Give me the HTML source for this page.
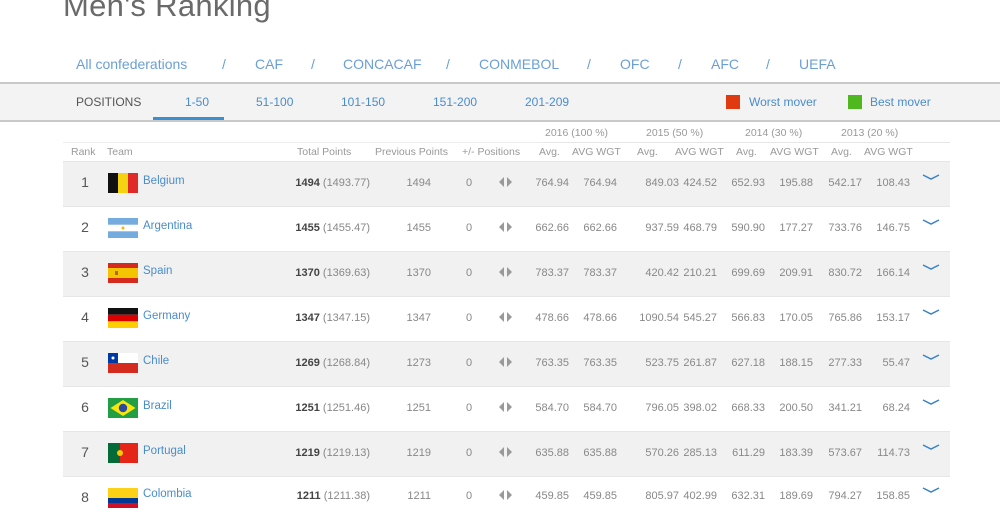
<!DOCTYPE html>
<html><head><meta charset="utf-8"><style>
*{margin:0;padding:0;box-sizing:border-box}
body{width:1000px;height:500px;overflow:hidden;background:#fff;font-family:"Liberation Sans",Arial,sans-serif;color:#777;position:relative}
.a{position:absolute;white-space:nowrap}
h1{position:absolute;left:63px;top:-12px;font-size:31px;font-weight:normal;color:#6a6a6a;letter-spacing:0.3px}
.conf{top:56px;font-size:14px;color:#6a9fd6}
.bar{position:absolute;left:0;top:82px;width:1000px;height:40px;background:#f3f3f3;border-top:2px solid #c9c9c9;border-bottom:2px solid #c9c9c9}
.pos{top:95px;font-size:12px;color:#4a8ccc}
.th{font-size:10.5px;color:#999}
.row{position:absolute;left:63px;width:887px;height:45px;border-top:1px solid #e6e6e6}
.g{background:#f1f1f1}
.rk{font-size:14px;color:#555;width:44px;text-align:center;left:63px}
.tm{font-size:11.5px;color:#4a8ccc;left:143px}
.tp{font-size:11px;color:#888;right:630px;text-align:right}
.tp b{color:#444}
.pp{font-size:11px;right:569px;color:#888}
.z{font-size:11px;left:466px;color:#888}
.n{font-size:11px;color:#888;text-align:right}
.flag{position:absolute;left:108px;width:30px;height:20px}
.arr{left:498px}
.chev{left:922px}
</style></head><body>
<h1>Men's Ranking</h1>
<div class="a conf" style="left:76px">All confederations</div>
<div class="a conf" style="left:222px">/</div>
<div class="a conf" style="left:255px">CAF</div>
<div class="a conf" style="left:311px">/</div>
<div class="a conf" style="left:343px">CONCACAF</div>
<div class="a conf" style="left:446px">/</div>
<div class="a conf" style="left:479px">CONMEBOL</div>
<div class="a conf" style="left:587px">/</div>
<div class="a conf" style="left:620px">OFC</div>
<div class="a conf" style="left:678px">/</div>
<div class="a conf" style="left:711px">AFC</div>
<div class="a conf" style="left:766px">/</div>
<div class="a conf" style="left:799px">UEFA</div>
<div class="bar"></div>
<div class="a pos" style="left:76px;color:#555">POSITIONS</div>
<div class="a pos" style="left:185px">1-50</div>
<div class="a" style="left:153px;top:117px;width:71px;height:3px;background:#3a8fd0"></div>
<div class="a pos" style="left:256px">51-100</div>
<div class="a pos" style="left:341px">101-150</div>
<div class="a pos" style="left:433px">151-200</div>
<div class="a pos" style="left:525px">201-209</div>
<div class="a" style="left:726px;top:95px;width:14px;height:14px;background:#e03a10"></div>
<div class="a pos" style="left:749px">Worst mover</div>
<div class="a" style="left:848px;top:95px;width:14px;height:14px;background:#4fb81e"></div>
<div class="a pos" style="left:870px">Best mover</div>

<div class="a th" style="left:545px;top:127px">2016 (100 %)</div>
<div class="a th" style="left:646px;top:127px">2015 (50 %)</div>
<div class="a th" style="left:745px;top:127px">2014 (30 %)</div>
<div class="a th" style="left:841px;top:127px">2013 (20 %)</div>
<div class="a" style="left:540px;top:142px;width:410px;height:1px;background:#e6e6e6"></div>
<div class="a" style="left:63px;top:142px;width:480px;height:1px;background:#eee"></div>
<div class="a th" style="left:71px;top:146px">Rank</div>
<div class="a th" style="left:107px;top:146px">Team</div>
<div class="a th" style="left:297px;top:146px">Total Points</div>
<div class="a th" style="left:375px;top:146px">Previous Points</div>
<div class="a th" style="left:462px;top:146px">+/- Positions</div>
<div class="a th" style="left:539px;top:146px">Avg.</div>
<div class="a th" style="left:572px;top:146px">AVG WGT</div>
<div class="a th" style="left:637px;top:146px">Avg.</div>
<div class="a th" style="left:675px;top:146px">AVG WGT</div>
<div class="a th" style="left:736px;top:146px">Avg.</div>
<div class="a th" style="left:770px;top:146px">AVG WGT</div>
<div class="a th" style="left:831px;top:146px">Avg.</div>
<div class="a th" style="left:864px;top:146px">AVG WGT</div>

<div class="row g" style="top:161px"></div>
<div class="row" style="top:206px"></div>
<div class="row g" style="top:251px"></div>
<div class="row" style="top:296px"></div>
<div class="row g" style="top:341px"></div>
<div class="row" style="top:386px"></div>
<div class="row g" style="top:431px"></div>
<div class="row" style="top:476px"></div>

<svg class="flag" style="top:173px" viewBox="0 0 3 2"><rect width="1" height="2" fill="#111"/><rect x="1" width="1" height="2" fill="#f5d312"/><rect x="2" width="1" height="2" fill="#e02a2a"/></svg>
<svg class="flag" style="top:218px" viewBox="0 0 3 2"><rect width="3" height="2" fill="#74acdf"/><rect y=".67" width="3" height=".66" fill="#fff"/><circle cx="1.5" cy="1" r=".15" fill="#f6b40e"/></svg>
<svg class="flag" style="top:263px" viewBox="0 0 3 2"><rect width="3" height="2" fill="#d52b1e"/><rect y=".5" width="3" height="1" fill="#f5c400"/><rect x=".7" y=".8" width=".3" height=".4" fill="#b5661d"/></svg>
<svg class="flag" style="top:308px" viewBox="0 0 3 2"><rect width="3" height=".67" fill="#111"/><rect y=".67" width="3" height=".67" fill="#dd0000"/><rect y="1.33" width="3" height=".67" fill="#ffce00"/></svg>
<svg class="flag" style="top:353px" viewBox="0 0 3 2"><rect width="3" height="2" fill="#d52b1e"/><rect width="3" height="1" fill="#fff"/><rect width="1" height="1" fill="#0039a6"/><circle cx=".5" cy=".5" r=".15" fill="#fff"/></svg>
<svg class="flag" style="top:398px" viewBox="0 0 3 2"><rect width="3" height="2" fill="#229e45"/><polygon points="1.5,.2 2.75,1 1.5,1.8 .25,1" fill="#f8e509"/><circle cx="1.5" cy="1" r=".42" fill="#2b49a3"/></svg>
<svg class="flag" style="top:443px" viewBox="0 0 3 2"><rect width="3" height="2" fill="#e42518"/><rect width="1.2" height="2" fill="#046a38"/><circle cx="1.2" cy="1" r=".3" fill="#f6c900"/></svg>
<svg class="flag" style="top:488px" viewBox="0 0 3 2"><rect width="3" height="2" fill="#ce1126"/><rect width="3" height="1.5" fill="#003893"/><rect width="3" height="1" fill="#fcd116"/></svg>

<div class="a rk" style="top:174px">1</div><div class="a tm" style="top:175px">Belgium</div>
<div class="a rk" style="top:219px">2</div><div class="a tm" style="top:220px">Argentina</div>
<div class="a rk" style="top:264px">3</div><div class="a tm" style="top:265px">Spain</div>
<div class="a rk" style="top:309px">4</div><div class="a tm" style="top:310px">Germany</div>
<div class="a rk" style="top:354px">5</div><div class="a tm" style="top:355px">Chile</div>
<div class="a rk" style="top:399px">6</div><div class="a tm" style="top:400px">Brazil</div>
<div class="a rk" style="top:444px">7</div><div class="a tm" style="top:445px">Portugal</div>
<div class="a rk" style="top:489px">8</div><div class="a tm" style="top:488px">Colombia</div>

<div class="a tp" style="top:177px"><b>1494</b> (1493.77)</div><div class="a pp" style="top:177px">1494</div><div class="a z" style="top:177px">0</div>
<div class="a tp" style="top:222px"><b>1455</b> (1455.47)</div><div class="a pp" style="top:222px">1455</div><div class="a z" style="top:222px">0</div>
<div class="a tp" style="top:267px"><b>1370</b> (1369.63)</div><div class="a pp" style="top:267px">1370</div><div class="a z" style="top:267px">0</div>
<div class="a tp" style="top:312px"><b>1347</b> (1347.15)</div><div class="a pp" style="top:312px">1347</div><div class="a z" style="top:312px">0</div>
<div class="a tp" style="top:357px"><b>1269</b> (1268.84)</div><div class="a pp" style="top:357px">1273</div><div class="a z" style="top:357px">0</div>
<div class="a tp" style="top:402px"><b>1251</b> (1251.46)</div><div class="a pp" style="top:402px">1251</div><div class="a z" style="top:402px">0</div>
<div class="a tp" style="top:447px"><b>1219</b> (1219.13)</div><div class="a pp" style="top:447px">1219</div><div class="a z" style="top:447px">0</div>
<div class="a tp" style="top:490px"><b>1211</b> (1211.38)</div><div class="a pp" style="top:490px">1211</div><div class="a z" style="top:490px">0</div>

<svg class="a arr" style="top:176px" width="16" height="12" viewBox="0 0 16 12"><path d="M6 1 L1 6 L6 11Z M9 1 L14 6 L9 11Z" fill="#999"/></svg>
<svg class="a arr" style="top:221px" width="16" height="12" viewBox="0 0 16 12"><path d="M6 1 L1 6 L6 11Z M9 1 L14 6 L9 11Z" fill="#999"/></svg>
<svg class="a arr" style="top:266px" width="16" height="12" viewBox="0 0 16 12"><path d="M6 1 L1 6 L6 11Z M9 1 L14 6 L9 11Z" fill="#999"/></svg>
<svg class="a arr" style="top:311px" width="16" height="12" viewBox="0 0 16 12"><path d="M6 1 L1 6 L6 11Z M9 1 L14 6 L9 11Z" fill="#999"/></svg>
<svg class="a arr" style="top:356px" width="16" height="12" viewBox="0 0 16 12"><path d="M6 1 L1 6 L6 11Z M9 1 L14 6 L9 11Z" fill="#999"/></svg>
<svg class="a arr" style="top:401px" width="16" height="12" viewBox="0 0 16 12"><path d="M6 1 L1 6 L6 11Z M9 1 L14 6 L9 11Z" fill="#999"/></svg>
<svg class="a arr" style="top:446px" width="16" height="12" viewBox="0 0 16 12"><path d="M6 1 L1 6 L6 11Z M9 1 L14 6 L9 11Z" fill="#999"/></svg>
<svg class="a arr" style="top:489px" width="16" height="12" viewBox="0 0 16 12"><path d="M6 1 L1 6 L6 11Z M9 1 L14 6 L9 11Z" fill="#999"/></svg>

<style>
.c1{right:431px}.c2{right:383px}.c3{right:321px}.c4{right:283px}.c5{right:235px}.c6{right:187px}.c7{right:138px}.c8{right:90px}
</style>
<div class="a n c1" style="top:177px">764.94</div><div class="a n c2" style="top:177px">764.94</div><div class="a n c3" style="top:177px">849.03</div><div class="a n c4" style="top:177px">424.52</div><div class="a n c5" style="top:177px">652.93</div><div class="a n c6" style="top:177px">195.88</div><div class="a n c7" style="top:177px">542.17</div><div class="a n c8" style="top:177px">108.43</div>
<div class="a n c1" style="top:222px">662.66</div><div class="a n c2" style="top:222px">662.66</div><div class="a n c3" style="top:222px">937.59</div><div class="a n c4" style="top:222px">468.79</div><div class="a n c5" style="top:222px">590.90</div><div class="a n c6" style="top:222px">177.27</div><div class="a n c7" style="top:222px">733.76</div><div class="a n c8" style="top:222px">146.75</div>
<div class="a n c1" style="top:267px">783.37</div><div class="a n c2" style="top:267px">783.37</div><div class="a n c3" style="top:267px">420.42</div><div class="a n c4" style="top:267px">210.21</div><div class="a n c5" style="top:267px">699.69</div><div class="a n c6" style="top:267px">209.91</div><div class="a n c7" style="top:267px">830.72</div><div class="a n c8" style="top:267px">166.14</div>
<div class="a n c1" style="top:312px">478.66</div><div class="a n c2" style="top:312px">478.66</div><div class="a n c3" style="top:312px">1090.54</div><div class="a n c4" style="top:312px">545.27</div><div class="a n c5" style="top:312px">566.83</div><div class="a n c6" style="top:312px">170.05</div><div class="a n c7" style="top:312px">765.86</div><div class="a n c8" style="top:312px">153.17</div>
<div class="a n c1" style="top:357px">763.35</div><div class="a n c2" style="top:357px">763.35</div><div class="a n c3" style="top:357px">523.75</div><div class="a n c4" style="top:357px">261.87</div><div class="a n c5" style="top:357px">627.18</div><div class="a n c6" style="top:357px">188.15</div><div class="a n c7" style="top:357px">277.33</div><div class="a n c8" style="top:357px">55.47</div>
<div class="a n c1" style="top:402px">584.70</div><div class="a n c2" style="top:402px">584.70</div><div class="a n c3" style="top:402px">796.05</div><div class="a n c4" style="top:402px">398.02</div><div class="a n c5" style="top:402px">668.33</div><div class="a n c6" style="top:402px">200.50</div><div class="a n c7" style="top:402px">341.21</div><div class="a n c8" style="top:402px">68.24</div>
<div class="a n c1" style="top:447px">635.88</div><div class="a n c2" style="top:447px">635.88</div><div class="a n c3" style="top:447px">570.26</div><div class="a n c4" style="top:447px">285.13</div><div class="a n c5" style="top:447px">611.29</div><div class="a n c6" style="top:447px">183.39</div><div class="a n c7" style="top:447px">573.67</div><div class="a n c8" style="top:447px">114.73</div>
<div class="a n c1" style="top:490px">459.85</div><div class="a n c2" style="top:490px">459.85</div><div class="a n c3" style="top:490px">805.97</div><div class="a n c4" style="top:490px">402.99</div><div class="a n c5" style="top:490px">632.31</div><div class="a n c6" style="top:490px">189.69</div><div class="a n c7" style="top:490px">794.27</div><div class="a n c8" style="top:490px">158.85</div>

<svg class="a chev" style="top:174px" width="18" height="8" viewBox="0 0 18 8"><path d="M1 1 L9 5 L17 1" fill="none" stroke="#3a82c4" stroke-width="1.5"/></svg>
<svg class="a chev" style="top:219px" width="18" height="8" viewBox="0 0 18 8"><path d="M1 1 L9 5 L17 1" fill="none" stroke="#3a82c4" stroke-width="1.5"/></svg>
<svg class="a chev" style="top:264px" width="18" height="8" viewBox="0 0 18 8"><path d="M1 1 L9 5 L17 1" fill="none" stroke="#3a82c4" stroke-width="1.5"/></svg>
<svg class="a chev" style="top:309px" width="18" height="8" viewBox="0 0 18 8"><path d="M1 1 L9 5 L17 1" fill="none" stroke="#3a82c4" stroke-width="1.5"/></svg>
<svg class="a chev" style="top:354px" width="18" height="8" viewBox="0 0 18 8"><path d="M1 1 L9 5 L17 1" fill="none" stroke="#3a82c4" stroke-width="1.5"/></svg>
<svg class="a chev" style="top:399px" width="18" height="8" viewBox="0 0 18 8"><path d="M1 1 L9 5 L17 1" fill="none" stroke="#3a82c4" stroke-width="1.5"/></svg>
<svg class="a chev" style="top:444px" width="18" height="8" viewBox="0 0 18 8"><path d="M1 1 L9 5 L17 1" fill="none" stroke="#3a82c4" stroke-width="1.5"/></svg>
<svg class="a chev" style="top:487px" width="18" height="8" viewBox="0 0 18 8"><path d="M1 1 L9 5 L17 1" fill="none" stroke="#3a82c4" stroke-width="1.5"/></svg>
</body></html>
